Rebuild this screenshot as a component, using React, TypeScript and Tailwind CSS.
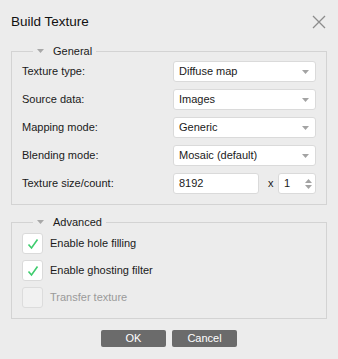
import React from 'react';

const FONT = { fontFamily: '"Liberation Sans", Arial, sans-serif' };

function Caret() {
  return (
    <svg width="7" height="4" viewBox="0 0 7 4" className="shrink-0">
      <path d="M0 0 L7 0 L3.5 4 Z" fill="#a3a3a3" />
    </svg>
  );
}

function Select({ value }: { value: string }) {
  return (
    <div className="flex items-center justify-between w-[143px] h-[21px] bg-white border border-[#dadada] rounded-[3px] pl-[5px] pr-[6px]">
      <span className="text-[11px] text-[#1a1a1a] leading-none">{value}</span>
      <Caret />
    </div>
  );
}

function Group({ title, children, className }: { title: string; children: React.ReactNode; className?: string }) {
  return (
    <fieldset className={`border border-[#d3d3d3] px-[10px] ${className || ''}`}>
      <legend className="ml-[11px] px-[4px] flex items-center h-[16px]">
        <svg width="7" height="4" viewBox="0 0 7 4" className="mr-[9px]">
          <path d="M0 0 L7 0 L3.5 4 Z" fill="#a8a8a8" />
        </svg>
        <span className="text-[11px] text-[#1a1a1a] leading-none">{title}</span>
      </legend>
      {children}
    </fieldset>
  );
}

const ROWS = [
  ['Texture type:', 'Diffuse map'],
  ['Source data:', 'Images'],
  ['Mapping mode:', 'Generic'],
  ['Blending mode:', 'Mosaic (default)'],
];

function Check({ label, checked, disabled }: { label: string; checked?: boolean; disabled?: boolean }) {
  return (
    <div className="flex items-center h-[21px]">
      <div className={`w-[21px] h-[21px] rounded-[3px] border flex items-center justify-center ${disabled ? 'bg-[#f1f1f1] border-[#dcdcdc]' : 'bg-white border-[#dadada]'}`}>
        {checked && (
          <svg width="12" height="12" viewBox="0 0 12 12">
            <path d="M1.5 6.5 L4.5 10 L10.5 1.5" stroke="#3fcc6e" strokeWidth="1.6" fill="none" />
          </svg>
        )}
      </div>
      <span className={`ml-[7px] text-[11px] leading-none ${disabled ? 'text-[#9a9a9a]' : 'text-[#1a1a1a]'}`}>{label}</span>
    </div>
  );
}

export default function App() {
  return (
    <div className="w-[338px] h-[359px] bg-[#ececec] px-[11px] overflow-hidden" style={FONT}>
      {/* Title */}
      <div className="flex justify-between pt-[12px] h-[43px] items-start">
        <span className="text-[13.5px] leading-[20px] text-[#111]">Build Texture</span>
        <svg width="14" height="14" viewBox="0 0 14 14" className="mr-[1px] mt-[3px]">
          <path d="M1 1 L13 13 M13 1 L1 13" stroke="#8c8c8c" strokeWidth="1.3" />
        </svg>
      </div>

      <Group title="General" className="pb-[10px]">
        <div className="flex flex-col gap-[7px] pt-[2px]">
          {ROWS.map(([label, value]) => (
            <div key={label} className="flex items-center justify-between h-[21px]">
              <span className="text-[11px] text-[#1a1a1a] leading-none">{label}</span>
              <Select value={value} />
            </div>
          ))}
          <div className="flex items-center justify-between h-[21px]">
            <span className="text-[11px] text-[#1a1a1a] leading-none">Texture size/count:</span>
            <div className="flex items-center w-[143px]">
              <div className="w-[86px] h-[21px] bg-white border border-[#dadada] rounded-[3px] pl-[5px] flex items-center">
                <span className="text-[11px] text-[#1a1a1a] leading-none">8192</span>
              </div>
              <span className="ml-[9px] text-[11px] text-[#1a1a1a] leading-none">x</span>
              <div className="ml-auto w-[38px] h-[21px] bg-white border border-[#dadada] rounded-[3px] pl-[5px] pr-[3px] flex items-center justify-between">
                <span className="text-[11px] text-[#1a1a1a] leading-none">1</span>
                <svg width="7" height="12" viewBox="0 0 7 12">
                  <path d="M0 5 L7 5 L3.5 1 Z M0 7 L7 7 L3.5 11 Z" fill="#a3a3a3" />
                </svg>
              </div>
            </div>
          </div>
        </div>
      </Group>

      <Group title="Advanced" className="mt-[9px] pb-[10px]">
        <div className="flex flex-col gap-[6px] pt-[3px]">
          <Check label="Enable hole filling" checked />
          <Check label="Enable ghosting filter" checked />
          <Check label="Transfer texture" disabled />
        </div>
      </Group>

      <div className="flex justify-center gap-[6px] mt-[11px]">
        <button className="w-[65px] h-[17px] rounded-[2px] bg-[#6b6b6b] text-white text-[11px] leading-none">OK</button>
        <button className="w-[65px] h-[17px] rounded-[2px] bg-[#6b6b6b] text-white text-[11px] leading-none">Cancel</button>
      </div>
    </div>
  );
}
